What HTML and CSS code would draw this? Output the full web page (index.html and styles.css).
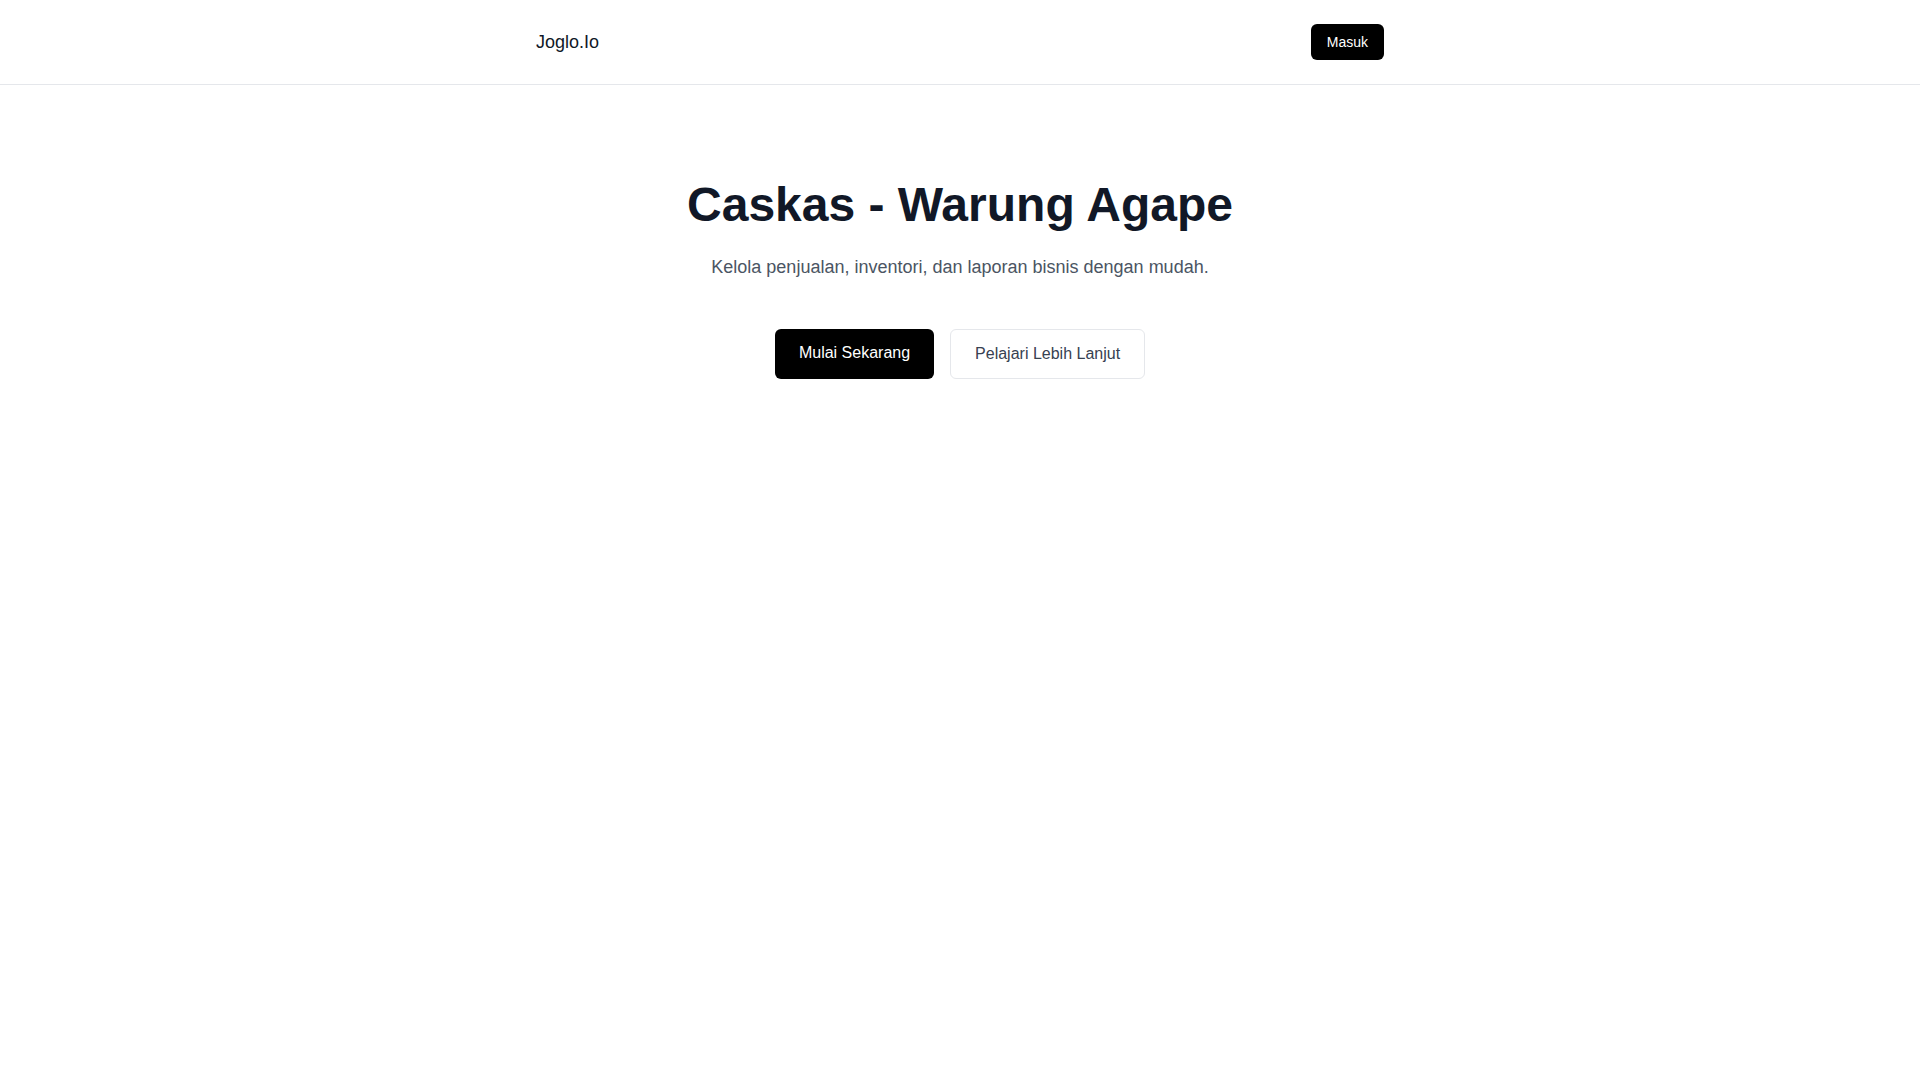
FILE: index.html
```html
<!DOCTYPE html>
<html lang="id">
<head>
<meta charset="utf-8">
<title>Caskas - Warung Agape</title>
<link rel="stylesheet" href="styles.css">
</head>
<body>
<header class="site-header">
  <div class="container header-inner">
    <a class="logo" href="#">Joglo.Io</a>
    <a class="btn-login" href="#">Masuk</a>
  </div>
</header>
<main class="hero">
  <div class="container hero-inner">
    <h1 class="hero-title">Caskas - Warung Agape</h1>
    <p class="hero-sub">Kelola penjualan, inventori, dan laporan bisnis dengan mudah.</p>
    <div class="hero-actions">
      <a class="btn btn-primary" href="#">Mulai Sekarang</a>
      <a class="btn btn-outline" href="#">Pelajari Lebih Lanjut</a>
    </div>
  </div>
</main>
</body>
</html>
```

FILE: styles.css
```css
* { box-sizing: border-box; }
html, body { margin: 0; padding: 0; }
body {
  font-family: "Liberation Sans", Arial, sans-serif;
  background: #ffffff;
  color: #111827;
}
a { text-decoration: none; }
.container {
  max-width: 896px;
  margin: 0 auto;
  padding: 0 24px;
}
.site-header {
  border-bottom: 1px solid #e5e7eb;
}
.header-inner {
  display: flex;
  align-items: center;
  justify-content: space-between;
  padding-top: 24px;
  padding-bottom: 24px;
}
.logo {
  font-size: 18px;
  line-height: 28px;
  color: #111827;
}
.btn-login {
  display: inline-block;
  background: #000;
  color: #fff;
  font-size: 14px;
  line-height: 20px;
  padding: 8px 16px;
  border-radius: 6px;
}
.hero {
  padding-top: 96px;
  padding-bottom: 96px;
}
.hero-inner {
  display: flex;
  flex-direction: column;
  align-items: center;
  text-align: center;
}
.hero-title {
  margin: 0 0 24px;
  font-size: 48px;
  line-height: 48px;
  font-weight: 700;
  color: #111827;
}
.hero-sub {
  margin: 0;
  font-size: 18px;
  line-height: 28px;
  color: #4b5563;
}
.hero-actions {
  margin-top: 48px;
  display: flex;
  gap: 16px;
}
.btn {
  display: inline-block;
  font-size: 16px;
  line-height: 24px;
  padding: 12px 24px;
  border-radius: 6px;
  border: 1px solid transparent;
}
.btn-primary {
  background: #000;
  color: #fff;
  border: 0;
  padding: 12px 24px 14px;
}
.btn-outline {
  background: #fff;
  color: #374151;
  border-color: #e5e7eb;
}
```
